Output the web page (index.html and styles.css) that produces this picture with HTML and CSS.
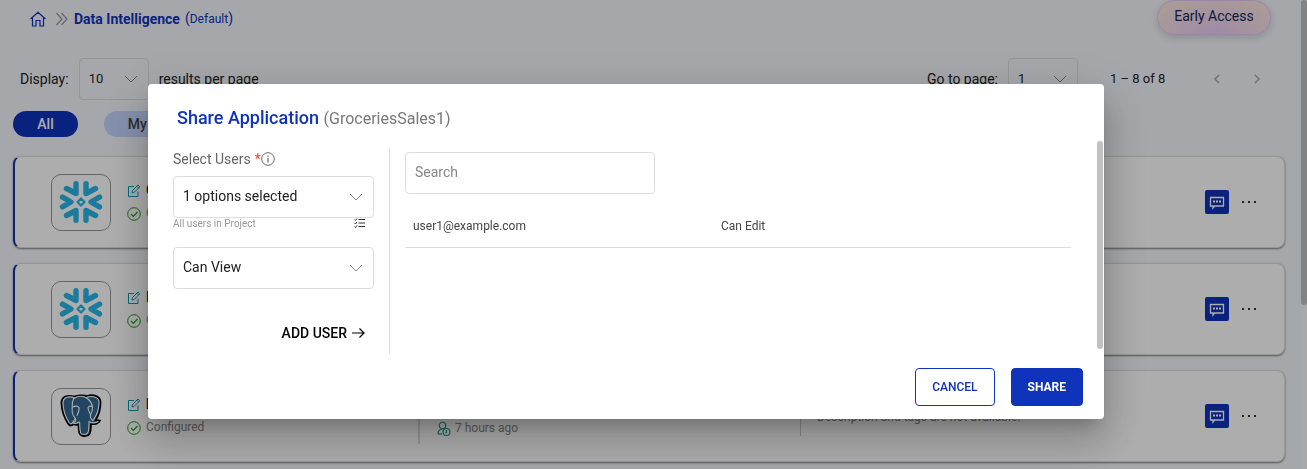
FILE: index.html
```html
<!DOCTYPE html>
<html lang="en">
<head>
    <meta charset="UTF-8" />
    <meta name="viewport" content="width=device-width, initial-scale=1.0" />
    <title>Data Intelligence</title>
    <link rel="stylesheet" href="styles.css">
</head>
<body>
    <!-- shared icons -->
    <svg class="sprite" aria-hidden="true">
        <symbol id="chevron" viewBox="0 0 14 8"><path d="M1 1l6 6 6-6" fill="none" stroke="currentColor" /></symbol>
        <symbol id="edit" viewBox="0 0 14 14">
            <path d="M7 2.500H1.500v10h9.500V7.500M5 9l.5-2.500 5.500-5.500 1.800 1.800-5.500 5.500zM9.800 2.200l1.800 1.800" fill="none" stroke="currentColor" />
        </symbol>
        <symbol id="check" viewBox="0 0 14 14">
            <circle cx="7" cy="7" r="6.300" fill="none" stroke="currentColor" />
            <path d="M4 7l2.300 2.300L10.500 5" fill="none" stroke="currentColor" stroke-width="1.200" />
        </symbol>
        <symbol id="user-time" viewBox="0 0 14 16">
            <g fill="none" stroke="currentColor" stroke-width="1.100">
                <circle cx="5.500" cy="4.500" r="3.200" />
                <path d="M1 13c0-3 1.500-5 4.500-5" />
                <path d="M1 13h4" />
                <circle cx="9.500" cy="11" r="3.500" />
                <path d="M9.500 9v2.200l-1 1" />
            </g>
        </symbol>
        <symbol id="chat" viewBox="0 0 24 24">
            <path d="M5.500 7.500h13v8.500H9.500L8 18v-2H5.500z" fill="none" stroke="#fff" stroke-width="1.300" />
            <path d="M8 10.500h2v2H8zM11 10.500h2v2h-2zM14 10.500h2v2h-2z" fill="#fff" />
        </symbol>
        <symbol id="dots" viewBox="0 0 16 4">
            <path d="M1 1h2v2H1zM7 1h2v2H7zM13 1h2v2h-2z" fill="currentColor" />
        </symbol>
        <symbol id="snowflake" viewBox="0 0 44 44">
            <g fill="none" stroke="#29b5e8" stroke-width="5.400" stroke-linecap="round" stroke-linejoin="round">
                <path d="M17 3.800V13.500L7.500 8.500M27 3.800V13.500L36.500 8.500" />
                <path d="M17 40.200V30.500L7.500 35.500M27 40.200V30.500L36.500 35.500" />
                <path d="M3.500 17.200L12 22l-8.500 4.800M40.500 17.200L32 22l8.500 4.800" />
            </g>
            <path d="M22 18.500l3.500 3.500-3.500 3.500-3.500-3.500z" fill="none" stroke="#29b5e8" stroke-width="2.200" stroke-linejoin="round" />
        </symbol>
        <symbol id="elephant" viewBox="0 0 42 44">
            <path d="M14 2.500C8 .8 1 2 1.500 10c.4 7 3 14 6.500 19.500 1.800 3 4 2.500 5.500.5 1.500 1 3 1 5 .5 0 3 0 6 1 9 1.500 3.500 9 3.500 10.500-.5 1-3 .8-6 1-9 3.500.5 8-.5 9-3.500-1.500-.5-3 .3-4.500-.3 3-4.500 5-12 5-18 0-6.700-8-8.200-13.500-6.200C22 .8 18 1.500 14 2.500z" fill="#336791" stroke="#000" stroke-width="1.800" stroke-linejoin="round" />
            <g fill="none" stroke="#fff" stroke-width="1.100" stroke-linecap="round" stroke-linejoin="round">
                <path d="M14 3.500C8.500 2 2.500 3 3 10c.4 6.500 2.500 13 6 18.500 1.500 2 2.800 1.500 4-.5l2-3" />
                <path d="M14 3.500c-1.500 3-2 6-1.800 9.500.2 3-1 6 1.300 9 1.500 2 3 2.500 2 5-1 1.500-2 1.500-2.500 2 2 1 4 .5 5.500-1" />
                <path d="M19.500 28c.5 4 0 8 1.200 11 1.300 2.200 6.300 2 7.500-1 1-4 .5-7 1-11" />
                <path d="M14 4.500C18 1.500 24 1.500 28 5c3 2.500 4 5 4.500 8 .2 3-1 6-2 8-.5 2 .5 4 2.500 5.500" />
                <path d="M27 3.200c4-1.500 12-.7 12 5 0 6-2 12.500-5.500 17.500" />
                <path d="M13 13c2-1.500 5-1 6 .5.500 3-.5 5-2 8M32.500 12.500c-2-.8-3.500-.5-4.500 1 0 3 1.500 5 2.500 7M30 28c2 1.500 6 1 8-.5" />
            </g>
        </symbol>
    </svg>

    <div class="page">
        <main class="content">
            <header class="topbar">
                <nav class="breadcrumb" aria-label="Breadcrumb">
                    <a href="#" aria-label="Home">
                        <svg class="home" viewBox="0 0 16 16"><path d="M.500 8L8 1.200 15.500 8M2.500 6.500v8.500h3.500V9.500h4V15h3.500V6.500" fill="none" stroke="currentColor" stroke-width="1.200" /></svg>
                    </a>
                    <svg class="sep" viewBox="0 0 12 14"><path d="M.500 1l5.500 6-5.500 6M5.500 1L11 7l-5.500 6" fill="none" stroke="currentColor" stroke-width="1.300" /></svg>
                    <a href="#" class="crumb">Data Intelligence</a>
                    <span class="crumb-note">(<small>Default</small>)</span>
                </nav>
                <button type="button" class="early">Early Access</button>
            </header>

            <div class="toolbar">
                <label for="pageSize">Display:</label>
                <span class="select small">
                    <select id="pageSize"><option>10</option><option>25</option></select>
                    <svg><use href="#chevron" /></svg>
                </span>
                <span class="grow">results per page</span>
                <label for="pageNo">Go to page:</label>
                <span class="select small">
                    <select id="pageNo"><option>1</option></select>
                    <svg><use href="#chevron" /></svg>
                </span>
                <span class="range">1 – 8 of 8</span>
                <div class="pager">
                    <button type="button" aria-label="Previous page" disabled><svg viewBox="0 0 8 12"><path d="M6 2L2 6l4 4" fill="none" stroke="currentColor" stroke-width="1.500" /></svg></button>
                    <button type="button" aria-label="Next page" disabled><svg viewBox="0 0 8 12"><path d="M2 2l4 4-4 4" fill="none" stroke="currentColor" stroke-width="1.500" /></svg></button>
                </div>
            </div>

            <div class="tabs">
                <button type="button" class="tab active">All</button>
                <button type="button" class="tab">My Apps</button>
            </div>

            <section class="card">
                <div class="logo"><svg><use href="#snowflake" /></svg></div>
                <div class="info">
                    <div class="name"><svg><use href="#edit" /></svg>GroceriesSales1</div>
                    <div class="status"><svg><use href="#check" /></svg>Configured</div>
                </div>
                <div class="owner"></div>
                <div class="desc"></div>
                <button type="button" class="chat" aria-label="Chat"><svg><use href="#chat" /></svg></button>
                <button type="button" class="more" aria-label="More"><svg><use href="#dots" /></svg></button>
            </section>

            <section class="card">
                <div class="logo"><svg><use href="#snowflake" /></svg></div>
                <div class="info">
                    <div class="name"><svg><use href="#edit" /></svg>Inventory</div>
                    <div class="status"><svg><use href="#check" /></svg>Configured</div>
                </div>
                <div class="owner"></div>
                <div class="desc"></div>
                <button type="button" class="chat" aria-label="Chat"><svg><use href="#chat" /></svg></button>
                <button type="button" class="more" aria-label="More"><svg><use href="#dots" /></svg></button>
            </section>

            <section class="card">
                <div class="logo"><svg><use href="#elephant" /></svg></div>
                <div class="info">
                    <div class="name"><svg><use href="#edit" /></svg>Postgres</div>
                    <div class="status"><svg><use href="#check" /></svg>Configured</div>
                </div>
                <div class="owner"><span><svg><use href="#user-time" /></svg>7 hours ago</span></div>
                <div class="desc">Description and tags are not available.</div>
                <button type="button" class="chat" aria-label="Chat"><svg><use href="#chat" /></svg></button>
                <button type="button" class="more" aria-label="More"><svg><use href="#dots" /></svg></button>
            </section>
        </main>
        <div class="page-scroll"><div class="page-thumb"></div></div>
    </div>

    <div class="overlay">
        <div class="dialog" role="dialog" aria-modal="true" aria-labelledby="shareTitle">
            <h2 id="shareTitle">Share Application <span>(GroceriesSales1)</span></h2>
            <div class="dialog-scroll">
                <div class="dialog-body">
                    <form class="picker">
                        <label for="users">Select Users <b>*</b><svg class="info-icon" viewBox="0 0 14 14"><circle cx="7" cy="7" r="6.300" fill="none" stroke="currentColor" /><path d="M7 6v4.500M7 3.500v1.300" stroke="currentColor" stroke-width="1.200" /></svg></label>
                        <span class="select">
                            <select id="users"><option>1 options selected</option></select>
                            <svg><use href="#chevron" /></svg>
                        </span>
                        <div class="hint">
                            All users in Project
                            <svg viewBox="0 0 12 10"><path d="M4.500 1.500H11M4.500 5H11M4.500 8.500H11M.500 1.500l1 1L3 .500M.500 5l1 1L3 4M.500 8.500l1 1L3 7.500" fill="none" stroke="currentColor" /></svg>
                        </div>
                        <span class="select">
                            <select id="role" aria-label="Permission"><option>Can View</option><option>Can Edit</option></select>
                            <svg><use href="#chevron" /></svg>
                        </span>
                        <button type="button" class="add">ADD USER
                            <svg viewBox="0 0 14 12"><path d="M1 6h12M8.500 1.500L13 6l-4.500 4.500" fill="none" stroke="currentColor" stroke-width="1.200" /></svg>
                        </button>
                    </form>
                    <div class="members">
                        <input type="text" placeholder="Search" aria-label="Search">
                        <table>
                            <tr><td>user1@example.com</td><td>Can Edit</td></tr>
                        </table>
                    </div>
                </div>
                <div class="scrollbar"></div>
            </div>
            <div class="actions">
                <button type="button" class="btn">CANCEL</button>
                <button type="button" class="btn primary">SHARE</button>
            </div>
        </div>
    </div>
</body>
</html>
```
FILE: styles.css
```css
* {
    box-sizing: border-box;
}

body {
    margin: 0;
    height: 100vh;
    overflow: hidden;
    background-color: #f4f7fd;
    font-family: Roboto, "Liberation Sans", sans-serif;
    font-size: 14px;
    line-height: 20px;
    color: #222;
}

button, input, select {
    font: inherit;
}

button {
    padding: 0;
    border: none;
    background: none;
    cursor: pointer;
}

svg {
    display: block;
    flex-shrink: 0;
}

.sprite {
    position: absolute;
    width: 0;
    height: 0;
}

/* page */
.page {
    display: flex;
    height: 100vh;
}

.content {
    flex: 1;
    padding: 0 16px 0 13px;
}

.page-scroll {
    width: 6px;
    background-color: #fafafa;
}

.page-thumb {
    height: 65%;
    border-radius: 4px;
    background-color: #c1c1c1;
}

.topbar {
    display: flex;
    justify-content: space-between;
    align-items: flex-start;
    padding: 0 14px 0 17px;
    height: 58px;
}

.breadcrumb {
    display: flex;
    align-items: center;
    padding-top: 8px;
    color: #1033bb;
}

.breadcrumb a {
    color: inherit;
    text-decoration: none;
}

.home {
    width: 16px;
    height: 16px;
}

.sep {
    width: 12px;
    height: 14px;
    margin: 0 6px 0 10px;
    color: #999;
}

.crumb {
    font-weight: 700;
}

.crumb-note {
    margin-left: 5px;
}

.crumb-note small {
    font-size: 12px;
}

.early {
    width: 114px;
    height: 35px;
    padding-bottom: 3px;
    border: 1px solid #e3c4fa;
    border-radius: 18px;
    background: radial-gradient(ellipse at 50% 100%, #e9cbf8, #fbe3e0 80%);
    box-shadow: 0 3px 8px rgba(0, 0, 0, .15);
    color: #102a50;
}

.toolbar {
    display: flex;
    align-items: center;
    padding: 0 24px 0 7px;
}

.toolbar .select {
    margin: 0 10px;
}

.grow {
    flex: 1;
}

.range {
    margin-left: 22px;
    width: 103px;
    font-size: 13px;
}

.pager {
    display: flex;
    gap: 32px;
    color: #aaa;
}

.pager button {
    color: inherit;
}

.pager svg {
    width: 8px;
    height: 12px;
}

.select {
    position: relative;
    display: block;
}

.select select {
    width: 100%;
    height: 42px;
    padding: 0 30px 2px 9px;
    appearance: none;
    border: 1px solid #ddd;
    border-radius: 4px;
    background: transparent;
    color: #222;
}

.select svg {
    position: absolute;
    right: 11px;
    top: 17px;
    width: 14px;
    height: 8px;
    color: #888;
    pointer-events: none;
}

.select.small {
    width: 70px;
}

.select.small select {
    padding-bottom: 0;
    font-size: 13px;
}

.tabs {
    display: flex;
    gap: 26px;
    padding: 11px 0 19px;
}

.tab {
    width: 65px;
    height: 26px;
    border-radius: 13px;
    background-color: #c4d7ff;
    font-weight: 500;
    color: #444;
}

.tab + .tab {
    width: 102px;
}

.tab.active {
    background-color: #1033bb;
    color: #fff;
}

.card {
    display: flex;
    align-items: center;
    height: 92px;
    margin-bottom: 15px;
    padding: 0 27px 0 36px;
    border: 1px solid #ddd;
    border-left: 2px solid #1033bb;
    border-radius: 8px;
    background-color: #fff;
    box-shadow: 0 1px 2px rgba(0, 0, 0, .5);
}

.logo {
    display: flex;
    align-items: center;
    justify-content: center;
    width: 60px;
    height: 57px;
    border: 1px solid #999;
    border-radius: 10px;
}

.logo svg {
    width: 44px;
    height: 44px;
}

.info {
    width: 307px;
    padding-left: 16px;
}

.name, .status, .owner span {
    display: flex;
    align-items: center;
    gap: 5px;
    line-height: 23px;
}

.name {
    font-weight: 700;
}

.name svg, .status svg {
    width: 14px;
    height: 14px;
}

.name svg {
    color: #0e9aba;
}

.status, .owner, .desc {
    font-size: 12px;
    color: #888;
}

.status svg {
    color: #16a016;
}

.owner {
    width: 382px;
    display: flex;
    align-items: flex-end;
    height: 56px;
    padding: 0 0 4px 17px;
    border-left: 2px solid #ddd;
}

.owner svg {
    width: 14px;
    height: 16px;
    color: #079a84;
}

.owner span {
    gap: 4px;
}

.desc {
    flex: 1;
    height: 40px;
    line-height: 42px;
    padding-left: 16px;
    border-left: 1px solid #ccc;
}

.chat {
    width: 24px;
    height: 24px;
    border-radius: 2px;
    background-color: #1033bb;
}

.chat svg {
    width: 24px;
    height: 24px;
}

.more {
    margin-left: 12px;
    color: #333;
}

.more svg {
    width: 16px;
    height: 4px;
}

/* share dialog */
.overlay {
    position: fixed;
    inset: 0;
    padding: 84px 203px 0 148px;
    background-color: rgba(0, 0, 0, .32);
}

.dialog {
    border-radius: 4px;
    background-color: #fff;
    box-shadow: 0 11px 15px -7px rgba(0, 0, 0, .2), 0 24px 38px 3px rgba(0, 0, 0, .14), 0 9px 46px 8px rgba(0, 0, 0, .12);
}

.dialog h2 {
    margin: 0;
    padding: 22px 29px 10px;
    font-size: 18px;
    font-weight: 500;
    line-height: 24px;
    color: #1033bb;
}

.dialog h2 span {
    font-size: 16px;
    font-weight: 400;
    color: #777;
}

.dialog-scroll {
    display: flex;
}

.dialog-body {
    flex: 1;
    display: flex;
    padding: 7px 26px 0 25px;
}

.scrollbar {
    width: 6px;
    height: 208px;
    margin-right: 1px;
    border-radius: 3px;
    background-color: #c1c1c1;
}

.picker {
    display: flex;
    flex-direction: column;
    width: 217px;
    padding-right: 15px;
    border-right: 1px solid #ddd;
}

.picker label {
    display: flex;
    align-items: center;
    height: 22px;
    margin-bottom: 6px;
    color: #666;
}

.picker b {
    margin-left: 4px;
    font-weight: 400;
    color: #f44336;
}

.info-icon {
    width: 14px;
    height: 14px;
}

.hint {
    display: flex;
    justify-content: space-between;
    height: 29px;
    padding-right: 8px;
    font-size: 10px;
    line-height: 12px;
    color: #999;
}

.hint svg {
    width: 12px;
    height: 10px;
    color: #333;
}

.add {
    display: flex;
    align-items: center;
    align-self: flex-end;
    gap: 4px;
    margin: 34px 9px 11px 0;
    font-weight: 500;
    color: #000;
}

.add svg {
    width: 14px;
    height: 12px;
}

.members {
    flex: 1;
    padding: 4px 0 0 15px;
}

.members input {
    width: 250px;
    height: 42px;
    padding: 0 9px 2px;
    border: 1px solid #ddd;
    border-radius: 4px;
}

.members input::placeholder {
    color: #888;
}

.members table {
    width: 100%;
    margin-top: 11px;
    border-collapse: collapse;
    font-size: 12px;
    color: #444;
}

.members td {
    height: 42px;
    padding: 1px 8px 0;
    border-bottom: 1px solid #ddd;
}

.members td:first-child {
    width: 308px;
}

.actions {
    display: flex;
    justify-content: flex-end;
    gap: 16px;
    padding: 14px 21px 13px;
}

.btn {
    height: 38px;
    padding: 0 16px;
    border: 1px solid #1033bb;
    border-radius: 4px;
    font-size: 12px;
    font-weight: 500;
    color: #1033bb;
}

.btn.primary {
    background-color: #1033bb;
    font-weight: 700;
    color: #fff;
}
```
